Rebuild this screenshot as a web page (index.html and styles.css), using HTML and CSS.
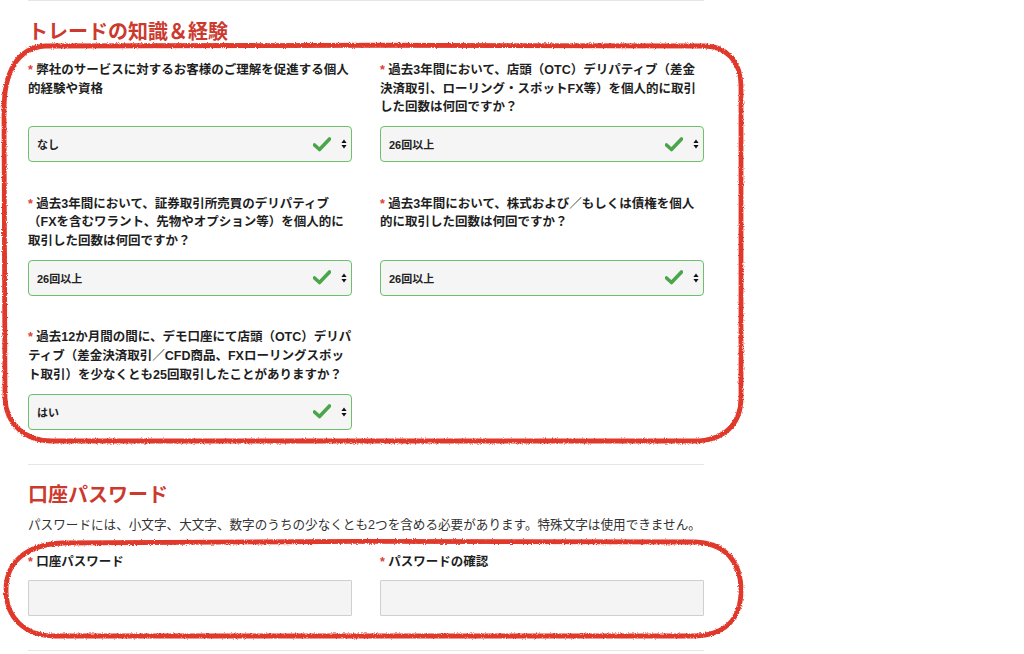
FILE: index.html
```html
<!DOCTYPE html>
<html lang="ja">
<head>
<meta charset="utf-8">
<link rel="stylesheet" href="styles.css">
</head>
<body>
<div class="page">
  <div class="wrap">
    <hr class="sep first">
    <h2 class="heading">トレードの知識＆経験</h2>
    <div class="grid">
      <div class="field">
        <label class="label"><span class="req">*</span> 弊社のサービスに対するお客様のご理解を促進する個人<br>的経験や資格</label>
        <div class="select"><span class="val">なし</span><span class="icons"><svg class="check" viewBox="0 0 18 15" width="18" height="15"><path d="M1.5 8 L6.5 12.5 L16.5 2" fill="none" stroke="#4aa64a" stroke-width="3.6" stroke-linecap="round" stroke-linejoin="round"/></svg><svg class="arrows" viewBox="0 0 6 10" width="6" height="10"><path d="M3 0.5 L5.6 4 L0.4 4 Z M3 9.5 L5.6 6 L0.4 6 Z" fill="#111"/></svg></span></div>
      </div>
      <div class="field">
        <label class="label"><span class="req">*</span> 過去3年間において、店頭（OTC）デリパティブ（差金<br>決済取引、ローリング・スポットFX等）を個人的に取引<br>した回数は何回ですか？</label>
        <div class="select"><span class="val">26回以上</span><span class="icons"><svg class="check" viewBox="0 0 18 15" width="18" height="15"><path d="M1.5 8 L6.5 12.5 L16.5 2" fill="none" stroke="#4aa64a" stroke-width="3.6" stroke-linecap="round" stroke-linejoin="round"/></svg><svg class="arrows" viewBox="0 0 6 10" width="6" height="10"><path d="M3 0.5 L5.6 4 L0.4 4 Z M3 9.5 L5.6 6 L0.4 6 Z" fill="#111"/></svg></span></div>
      </div>
      <div class="field">
        <label class="label"><span class="req">*</span> 過去3年間において、証券取引所売買のデリパティブ<br>（FXを含むワラント、先物やオプション等）を個人的に<br>取引した回数は何回ですか？</label>
        <div class="select"><span class="val">26回以上</span><span class="icons"><svg class="check" viewBox="0 0 18 15" width="18" height="15"><path d="M1.5 8 L6.5 12.5 L16.5 2" fill="none" stroke="#4aa64a" stroke-width="3.6" stroke-linecap="round" stroke-linejoin="round"/></svg><svg class="arrows" viewBox="0 0 6 10" width="6" height="10"><path d="M3 0.5 L5.6 4 L0.4 4 Z M3 9.5 L5.6 6 L0.4 6 Z" fill="#111"/></svg></span></div>
      </div>
      <div class="field">
        <label class="label"><span class="req">*</span> 過去3年間において、株式および／もしくは債権を個人<br>的に取引した回数は何回ですか？</label>
        <div class="select"><span class="val">26回以上</span><span class="icons"><svg class="check" viewBox="0 0 18 15" width="18" height="15"><path d="M1.5 8 L6.5 12.5 L16.5 2" fill="none" stroke="#4aa64a" stroke-width="3.6" stroke-linecap="round" stroke-linejoin="round"/></svg><svg class="arrows" viewBox="0 0 6 10" width="6" height="10"><path d="M3 0.5 L5.6 4 L0.4 4 Z M3 9.5 L5.6 6 L0.4 6 Z" fill="#111"/></svg></span></div>
      </div>
      <div class="field">
        <label class="label"><span class="req">*</span> 過去12か月間の間に、デモ口座にて店頭（OTC）デリパ<br>ティブ（差金決済取引／CFD商品、FXローリングスポッ<br>ト取引）を少なくとも25回取引したことがありますか？</label>
        <div class="select"><span class="val">はい</span><span class="icons"><svg class="check" viewBox="0 0 18 15" width="18" height="15"><path d="M1.5 8 L6.5 12.5 L16.5 2" fill="none" stroke="#4aa64a" stroke-width="3.6" stroke-linecap="round" stroke-linejoin="round"/></svg><svg class="arrows" viewBox="0 0 6 10" width="6" height="10"><path d="M3 0.5 L5.6 4 L0.4 4 Z M3 9.5 L5.6 6 L0.4 6 Z" fill="#111"/></svg></span></div>
      </div>
    </div>
    <hr class="sep mid">
    <h2 class="heading h2b">口座パスワード</h2>
    <p class="desc">パスワードには、小文字、大文字、数字のうちの少なくとも2つを含める必要があります。特殊文字は使用できません。</p>
    <div class="pwgrid">
      <div class="pfield">
        <label class="plabel"><span class="req">*</span> 口座パスワード</label>
        <div class="input"></div>
      </div>
      <div class="pfield">
        <label class="plabel"><span class="req">*</span> パスワードの確認</label>
        <div class="input"></div>
      </div>
    </div>
    <hr class="sep last">
  </div>
  <svg class="loops" width="1024" height="654" viewBox="0 0 1024 654">
    <defs>
      <filter id="rough" x="-5%" y="-5%" width="110%" height="110%">
        <feTurbulence type="fractalNoise" baseFrequency="0.9" numOctaves="2" seed="3" result="n"/>
        <feDisplacementMap in="SourceGraphic" in2="n" scale="3" xChannelSelector="R" yChannelSelector="G"/>
      </filter>
    </defs>
    <g filter="url(#rough)" fill="none" stroke="#e0392a" stroke-width="4.8">
      <path d="M45 46 C250 45 500 45 705 46 C726 46 741 62 741 86 L741 398 C741 424 724 441 694 441 L52 441 C25 441 6 424 5 398 L4 110 C4 74 16 48 45 46 Z"/>
      <path d="M62 543 C250 541 520 541 695 542 C725 543 741 562 741 590 C741 620 724 636 692 636 L55 636 C24 636 6 617 6 590 C6 562 26 545 62 543 Z"/>
    </g>
  </svg>
</div>
</body>
</html>
```

FILE: styles.css
```css
* { box-sizing: border-box; }
html, body { margin: 0; padding: 0; background: #fff; }
body {
  font-family: "Liberation Sans", "Noto Sans CJK JP", sans-serif;
  color: #222;
}
.page { position: relative; width: 1024px; height: 654px; overflow: hidden; }
.wrap { width: 676px; margin-left: 28px; }
.sep { border: 0; border-top: 1px solid #e6e6e6; margin: 0; height: 0; }
.heading {
  margin: 0;
  font-size: 20px;
  line-height: 24px;
  font-weight: 700;
  color: #cc3a2f;
}
.first + .heading { margin-top: 19px; }
.grid {
  display: grid;
  grid-template-columns: 324px 324px;
  column-gap: 28px;
  row-gap: 32.6px;
  margin-top: 17px;
}
.field { display: flex; flex-direction: column; }
.label {
  font-size: 12.5px;
  line-height: 18.7px;
  font-weight: 700;
  color: #1e1e1e;
  margin-bottom: 9px;
  flex: 1;
  white-space: nowrap;
}
.req { color: #d9413a; font-weight: 700; }
.select {
  height: 36px;
  border: 1px solid #6cc06c;
  border-radius: 4px;
  background: #f5f5f5;
  display: flex;
  align-items: center;
  justify-content: space-between;
  padding: 0 4px 0 8px;
}
.val { font-size: 11px; font-weight: 700; color: #222; }
.icons { display: flex; align-items: center; gap: 10px; }
.check { display: block; }
.arrows { display: block; }
.mid { margin-top: 34px; }
.h2b { margin-top: 18px; }
.desc {
  margin: 8px 0 0;
  font-size: 12.6px;
  line-height: 20px;
  color: #333;
  white-space: nowrap;
}
.pwgrid {
  display: grid;
  grid-template-columns: 324px 324px;
  column-gap: 28px;
  margin-top: 18px;
}
.pfield { display: flex; flex-direction: column; }
.plabel { font-size: 12.5px; line-height: 19px; font-weight: 700; margin-bottom: 8px; color: #1e1e1e; }
.input {
  height: 36px;
  border: 1px solid #cfcfcf;
  background: #f4f4f4;
  border-radius: 1px;
}
.last { margin-top: 34px; }
.loops { position: absolute; left: 0; top: 0; pointer-events: none; }
```
